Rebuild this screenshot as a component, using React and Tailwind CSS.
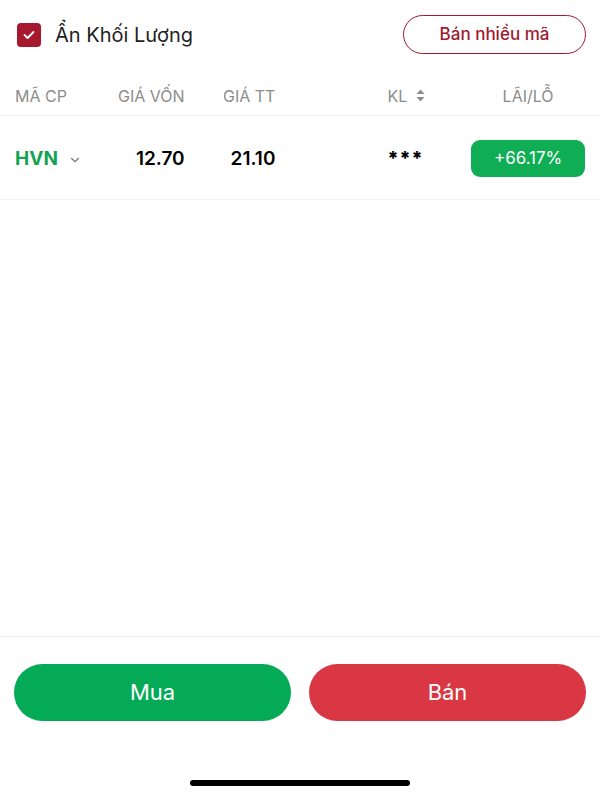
import { ChevronDown } from 'lucide-react';

const font = { fontFamily: 'Inter, "Noto Sans", sans-serif' };

const HeaderRow = () => (
  <div className="flex items-center h-[43px] pt-[4px] px-[15px] text-[16px] text-[#8c8c8c]">
    <div className="w-[100px]">MÃ CP</div>
    <div className="w-[70px] text-right whitespace-nowrap">GIÁ VỐN</div>
    <div className="w-[91px] text-right whitespace-nowrap">GIÁ TT</div>
    <div className="ml-[112px] w-[84px] flex items-center gap-[9px]">
      KL
      <svg width="9" height="13" viewBox="0 0 9 13" fill="#8c8c8c">
        <path d="M4.5 0.5 L8.5 5 L0.5 5 Z" />
        <path d="M4.5 12.5 L8.5 8 L0.5 8 Z" />
      </svg>
    </div>
    <div className="w-[114px] text-center">LÃI/LỖ</div>
  </div>
);

const StockRow = ({ code, cost, price, change }) => (
  <div className="flex items-center h-[85px] pt-[2px] px-[15px] border-t border-b border-[#f2f2f2]">
    <div className="w-[100px] flex items-center gap-[10px] pt-[2px]">
      <span className="text-[19px] font-bold text-[#12a352]">{code}</span>
      <ChevronDown className="w-[14px] h-[14px] text-[#777]" strokeWidth={2} />
    </div>
    <div className="w-[70px] text-right text-[19px] font-semibold text-black pt-[2px]">{cost}</div>
    <div className="w-[91px] text-right text-[19px] font-semibold text-black pt-[2px]">{price}</div>
    <div className="ml-[112px] w-[84px] text-[19px] font-extrabold text-black tracking-[1px] pt-[2px]">***</div>
    <div className="w-[114px] h-[37px] rounded-[9px] bg-[#0fae55] flex items-center justify-center text-white text-[17px]">
      {change}
    </div>
  </div>
);

export default function App() {
  return (
    <div className="w-[600px] h-[800px] bg-white flex flex-col" style={font}>
      {/* Top bar */}
      <div className="flex items-center justify-between h-[68px] pl-[17px] pr-[14px] pt-[1px]">
        <div className="flex items-center gap-[14px]">
          <div className="w-[24px] h-[24px] rounded-[4px] bg-[#a5182d] flex items-center justify-center">
            <svg width="12" height="10" viewBox="0 0 12 10" fill="none" stroke="white" strokeWidth="1.8" strokeLinecap="round" strokeLinejoin="round">
              <path d="M1.5 5 L4.6 8 L10.5 2" />
            </svg>
          </div>
          <span className="text-[20px] text-[#1f1f1f]">Ẩn Khối Lượng</span>
        </div>
        <button className="w-[183px] h-[39px] rounded-full border-[1.5px] border-[#a5182d] text-[#9e1a2f] text-[17px] font-medium">
          Bán nhiều mã
        </button>
      </div>

      <div className="h-[4px]" />
      <HeaderRow />
      <StockRow code="HVN" cost="12.70" price="21.10" change="+66.17%" />

      <div className="flex-1" />

      {/* Bottom actions */}
      <div className="border-t border-[#ebebeb] h-[164px] flex flex-col">
        <div className="flex gap-[18px] px-[14px] pt-[27px]">
          <button className="flex-1 h-[57px] rounded-full bg-[#05aa56] text-white text-[22px]">Mua</button>
          <button className="flex-1 h-[57px] rounded-full bg-[#d93743] text-white text-[22px]">Bán</button>
        </div>
        <div className="flex justify-center mt-[59px]">
          <div className="w-[220px] h-[6px] rounded-full bg-black" />
        </div>
      </div>
    </div>
  );
}
